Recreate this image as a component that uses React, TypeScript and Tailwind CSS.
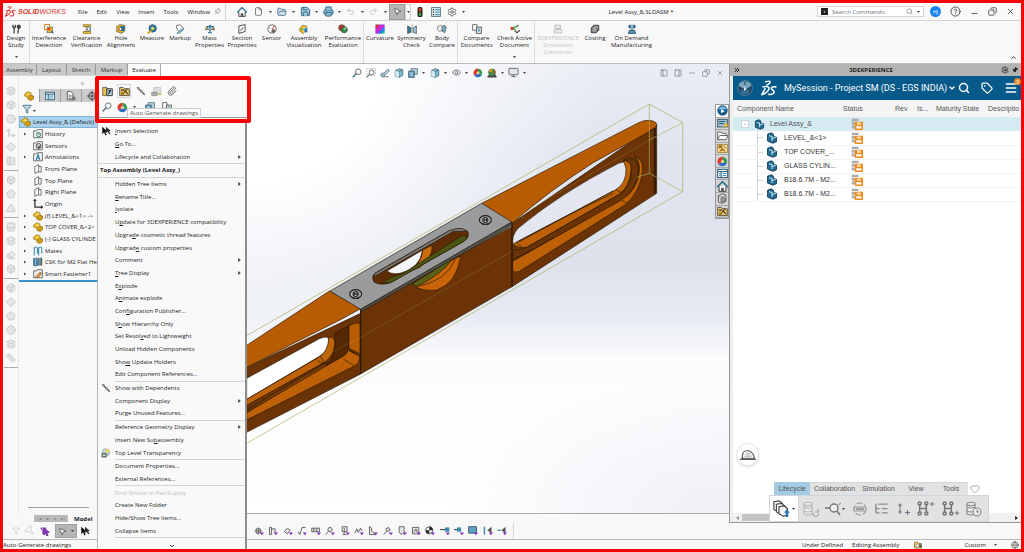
import React from "react";
import {
  File, FolderOpen, Save, Printer, Undo2, Redo2, MousePointer2, Settings, Pin, Search, Tag, Menu as MenuIcon,
  ChevronDown, ChevronsRight, ChevronUp, Minus, X, Copy, HelpCircle, Heart, Monitor, Eye, Paperclip, Filter,
  PanelLeft, PanelRight, Box, Pentagon, Circle, Diamond, Ruler, Eraser, Triangle, Layers,
  Database, ListTree, GitMerge, Plus, Globe,
} from "lucide-react";

type IconName =
  | "fasteners" | "interference" | "clearance" | "hole" | "measure" | "markup" | "mass" | "section" | "sensor"
  | "assembly" | "performance" | "curvature" | "symmetry" | "body" | "compare" | "check" | "sim" | "costing"
  | "demand" | "part" | "props" | "config" | "target" | "folderHist" | "folderSens" | "folderAnn" | "plane"
  | "origin" | "mates" | "csk" | "smart" | "zoom" | "zoomBox" | "brush" | "cube" | "cubes" | "ball" | "scene"
  | "globe" | "gallery" | "folder" | "library" | "house" | "cylinder" | "drawing" | "genDrawing" | "openDoc" | "hide" | "ghost"
  | "cursor" | "transparency" | "list" | "purpleCursor" | "box3d" | "saveStatus" | "light" | "compass" | "cap"
  | "reload" | "inspect" | "history" | "tag2";

const art: Record<IconName, React.ReactNode> = {
  fasteners: (<><path d="M2 1v4l2 2v8h2V7l2-2V1H6v3H4V1zM10 1h5l1 5-3 2-1 7h-2l1-7-2-3z" fill="#444" /></>),
  interference: (<><rect x="1" y="1" width="8" height="8" fill="#fff" stroke="#c77b16" strokeWidth="1.5" /><rect x="5" y="5" width="9" height="9" fill="#f0bd2d" stroke="#5b5b5b" /><rect x="6" y="6" width="4" height="4" fill="#d8421f" /><path d="M11 11l4 4" stroke="#2874a0" strokeWidth="2" /></>),
  clearance: (<><path d="M2 1h12v3H2zM2 12h12v3H2z" fill="#f2c230" stroke="#7b6516" /><path d="M5 4l3 4-3 4h6L8 8l3-4z" fill="#f7dd78" stroke="#4f4f4f" /><path d="M13 5v6" stroke="#2874a0" strokeWidth="2" /></>),
  hole: (<><path d="M1 4l5-3 8 1v9l-5 4-8-3z" fill="#e8b21e" stroke="#4b4b4b" /><path d="M7 3h7v8H8z" fill="#2e7399" /><circle cx="7" cy="8" r="2.4" fill="#fff" stroke="#333" /></>),
  measure: (<><circle cx="9" cy="7" r="6" fill="#2c7da5" stroke="#204c66" /><circle cx="9" cy="7" r="2.6" fill="#f0d34c" /><path d="M1 15l6-4" stroke="#e0a81a" strokeWidth="3" /></>),
  markup: (<><path d="M2 3l6-2 6 6-5 6-5-3z" fill="#fff" stroke="#555" strokeWidth="1.3" /><path d="M3 15l8-8 3 2-8 6z" fill="#8cc3dc" stroke="#3d6e86" /></>),
  mass: (<><path d="M8 1v12M2 4h12M5 14h6" stroke="#26617f" strokeWidth="1.8" /><path d="M0 9l3-5 3 5zM10 9l3-5 3 5z" fill="#e7b321" stroke="#26617f" /><path d="M8 1l3 4H5z" fill="#2c7da5" /></>),
  section: (<><path d="M3 3l10-2v11L3 15z" fill="#fff" stroke="#444" strokeWidth="1.5" /><path d="M6 11c0-4 4-2 4-6" fill="none" stroke="#444" strokeWidth="1.6" /></>),
  sensor: (<><circle cx="8" cy="8" r="6.5" fill="#fff" stroke="#555" strokeWidth="1.4" /><path d="M8 8l4-5" stroke="#d33" strokeWidth="1.6" /><circle cx="10" cy="11" r="3" fill="#666" /><path d="M4 5l2 2" stroke="#555" /></>),
  assembly: (<><path d="M1 7l5-5 7 2-1 8-6 3-5-4z" fill="#f0bb26" stroke="#77600e" /><path d="M8 6h6v8H8z" fill="#2c7da5" stroke="#fff" /><path d="M3 7h4v3H3z" fill="#5ba85a" /></>),
  performance: (<><circle cx="6" cy="6" r="5" fill="#cc3527" stroke="#444" /><circle cx="10" cy="9" r="5" fill="#3a8f4c" stroke="#333" /><path d="M10 9l3-4" stroke="#fff" strokeWidth="1.5" /></>),
  curvature: (<><rect x="1" y="1" width="14" height="14" fill="#2d5be3" /><path d="M1 1h7L1 9z" fill="#e92c2c" /><path d="M8 1h7v3L4 15H1V9z" fill="#cf27d6" /><path d="M15 4v6l-5 5H4z" fill="#2b7cf0" /><path d="M15 10v5h-5z" fill="#19d07a" /></>),
  symmetry: (<><path d="M1 3l5 3v7l-5 2z" fill="#2c7da5" stroke="#333" /><path d="M15 3l-5 3v7l5 2z" fill="#9fc8da" stroke="#333" /><path d="M8 1v14" stroke="#444" strokeDasharray="3 1" /></>),
  body: (<><path d="M1 4l5-2 3 2v6l-5 2-3-3z" fill="#eee" stroke="#555" /><path d="M8 4l4-2 3 3-3 9-4-3z" fill="#75b0cb" stroke="#333" /></>),
  compare: (<><path d="M1 1h7v9H1z" fill="#fff" stroke="#555" strokeWidth="1.3" /><path d="M7 5h8v10H7z" fill="#e8eff3" stroke="#444" strokeWidth="1.3" /><path d="M9 8h4M9 11h4" stroke="#2c7da5" strokeWidth="1.6" /></>),
  check: (<><path d="M14 2L4 7l5 3" fill="none" stroke="#52a24d" strokeWidth="2.4" /><circle cx="3" cy="7" r="2.5" fill="#cf3f27" /><path d="M8 11l3 3 5-4" fill="none" stroke="#444" strokeWidth="1.8" /></>),
  sim: (<><path d="M3 2h9v5H3zM2 9h12v5H2z" fill="#eee" stroke="#bbb" strokeWidth="1.4" /><path d="M5 12l7-8" stroke="#bbb" /></>),
  costing: (<><path d="M2 6l4-4h8v8l-4 4H2z" fill="#777" stroke="#333" strokeWidth="1.3" /><path d="M4 8h6M4 11h6M6 5h7" stroke="#eee" /></>),
  demand: (<><path d="M3 2h10v4H3z" fill="#2f7ba0" stroke="#1c4a60" /><path d="M8 5v5M4 10h8l2 5H2z" fill="#4f9dbf" stroke="#1c4a60" strokeWidth="1.3" /><circle cx="8" cy="4" r="1.5" fill="#fff" /></>),
  part: (<><path d="M1 5l5-4 5 2v3l4 2v4l-5 3-4-2v-3L1 8z" fill="#f0c02c" stroke="#8b6a10" strokeWidth="1.1" /><path d="M6 5l5 1M8 9l5 2" stroke="#fff2b0" strokeWidth="1.3" /><path d="M7 9l3-3 5 3v3l-3 3z" fill="#d99d12" stroke="#8b6a10" /></>),
  props: (<><rect x="1" y="2" width="14" height="12" fill="#fff" stroke="#2b5f7b" strokeWidth="1.5" /><path d="M1 5h14M6 5v9" stroke="#2b5f7b" strokeWidth="1.6" /><path d="M8 8h5M8 11h5M3 8h2M3 11h2" stroke="#2b86b5" strokeWidth="1.4" /></>),
  config: (<><path d="M2 1h6l3 3v10H2z" fill="#fff" stroke="#444" strokeWidth="1.3" /><path d="M5 5v7h4M5 8h5" fill="none" stroke="#444" /><rect x="9" y="9" width="6" height="6" fill="#777" /></>),
  target: (<><circle cx="8" cy="8" r="5.5" fill="none" stroke="#444" strokeWidth="1.5" /><path d="M8 0v16M0 8h16" stroke="#444" strokeWidth="1.5" /></>),
  folderHist: (<><path d="M1 3h5l1-2h8v13H1z" fill="#f5f5f5" stroke="#555" strokeWidth="1.3" /><circle cx="9" cy="9" r="3.5" fill="#dff0e8" stroke="#2b6f65" strokeWidth="1.3" /><path d="M9 6v3h2" fill="none" stroke="#2b6f65" /></>),
  folderSens: (<><path d="M1 3h5l1-2h8v13H1z" fill="#f5f5f5" stroke="#555" strokeWidth="1.3" /><circle cx="9" cy="8" r="4" fill="#ccc" stroke="#333" strokeWidth="1.3" /><circle cx="10" cy="10" r="2" fill="#555" /></>),
  folderAnn: (<><path d="M1 3h5l1-2h8v13H1z" fill="#f5f5f5" stroke="#555" strokeWidth="1.3" /><path d="M5 13l3-9 3 9M6 10h4" fill="none" stroke="#2578a8" strokeWidth="1.7" /></>),
  plane: (<path d="M3 4l6-3v11l-6 3zM9 4h4v9H9" fill="#fff" stroke="#555" strokeWidth="1.3" />),
  origin: (<path d="M3 1v12h12M1 3l2-2 2 2M13 11l2 2-2 2" fill="none" stroke="#333" strokeWidth="2" />),
  mates: (<path d="M2 15V4a2 2 0 015 0v8M9 15V4a2 2 0 015 0v8" fill="none" stroke="#3d8cae" strokeWidth="1.8" />),
  csk: (<><path d="M1 2h6v12H1z" fill="#3d86a8" stroke="#1d4b62" /><path d="M9 2h5v11H9z" fill="#477" stroke="#223" /><path d="M4 1v13M11 1v13" stroke="#cde" /></>),
  smart: (<><path d="M1 3h5l1-2h8v13H1z" fill="#eee" stroke="#555" strokeWidth="1.3" /><path d="M4 13l7-8 3 2-6 7z" fill="#e9a23c" stroke="#6d4a15" /></>),
  zoom: (<><circle cx="10" cy="6" r="4.5" fill="#f4f8fa" stroke="#666" strokeWidth="1.5" /><path d="M7 9l-6 6" stroke="#5c7f94" strokeWidth="2.4" /></>),
  zoomBox: (<><path d="M1 1h14v11H1z" fill="none" stroke="#999" strokeDasharray="3 2" /><circle cx="9" cy="7" r="4" fill="#f4f8fa" stroke="#666" strokeWidth="1.4" /><path d="M6 10l-5 5" stroke="#5c7f94" strokeWidth="2.2" /></>),
  brush: (<><path d="M4 10l9-8 2 2-8 8zM3 14h11" fill="#c7dbe4" stroke="#58788b" strokeWidth="1.5" /><circle cx="4" cy="11" r="3" fill="#9dbac8" stroke="#58788b" /></>),
  cube: (<><path d="M2 4l7-3 5 2v9l-6 3-6-2z" fill="#78b9d4" stroke="#47606e" strokeWidth="1.2" /><path d="M2 4l6 2 6-3M8 6v9" fill="none" stroke="#47606e" /><path d="M2 4l6 2v9l-6-2z" fill="#d6e8ef" /></>),
  cubes: (<><path d="M5 1h10v9H5z" fill="#b8d4e0" stroke="#55707e" strokeWidth="1.3" /><path d="M1 5h9v10H1z" fill="#6ba8c4" stroke="#395462" strokeWidth="1.3" /><path d="M3 8h5M3 11h5" stroke="#dfeef5" /></>),
  ball: (<><path d="M8 8V1a7 7 0 016 10z" fill="#2f9e4f" /><path d="M8 8l6 3A7 7 0 012 12z" fill="#2d6fc4" /><path d="M8 8L2 12A7 7 0 018 1z" fill="#dd3a2b" /><circle cx="8" cy="8" r="2.3" fill="#f6d6a0" /></>),
  scene: (<><path d="M1 13l3-3h9l2 3v2H1z" fill="#444" /><circle cx="8" cy="7" r="5.5" fill="#38974c" stroke="#6a5a2e" /><path d="M8 7L3 5a5.500 5.500 0 015-4z" fill="#e0a020" /><path d="M8 7l5-3 .5 4z" fill="#d8402c" /></>),
  globe: (<><circle cx="8" cy="8" r="7" fill="#1a6fa6" stroke="#133d5c" /><path d="M2 5q6-6 12 0-6 3-12 0z" fill="#7ec0e4" /><path d="M3 11q5 3 10 0" fill="none" stroke="#0f3f63" strokeWidth="1.5" /><path d="M6 6l5 3-5 3z" fill="#fff" /></>),
  gallery: (<><rect x="1" y="2" width="14" height="11" fill="#9cc1cf" stroke="#395b69" strokeWidth="1.4" /><path d="M3 8h7M3 5h9" stroke="#2b6280" strokeWidth="1.5" /><path d="M8 13l6-7 2 6z" fill="#efb929" /></>),
  folder: (<path d="M1 3h5l1 2h6v3h3l-3 6H1zM1 14l3-6h9" fill="#fff" stroke="#666" strokeWidth="1.4" />),
  library: (<><rect x="1" y="2" width="14" height="12" fill="#f0d89a" stroke="#9b7422" /><path d="M3 4h4v3H3zM9 4l4 4M4 12l4-4 4 4" fill="#d08b16" stroke="#7d5510" strokeWidth="1.2" /></>),
  house: (<><path d="M3 8v7h10V8" fill="#fff" stroke="#333" strokeWidth="1.4" /><path d="M0 9l8-8 8 8" fill="none" stroke="#27708f" strokeWidth="2.2" /><path d="M6 10h4v5H6z" fill="#555" /></>),
  cylinder: (<><path d="M2 4l6-3 5 2v9l-6 3-5-2z" fill="#ddd" stroke="#555" strokeWidth="1.3" /><path d="M2 4l5 2 6-3M7 6v9" fill="none" stroke="#777" /><circle cx="9" cy="10" r="3.500" fill="#999" stroke="#555" /></>),
  drawing: (<><path d="M1 2h6l2 3h6v9H1z" fill="#eec75d" stroke="#6b5a2a" strokeWidth="1.2" /><circle cx="7" cy="9" r="3" fill="#fff" stroke="#555" /><path d="M10 7h5v7l-5-3z" fill="#555" /></>),
  genDrawing: (<><path d="M1 2h5l2 2h7v10H1z" fill="#eec75d" stroke="#4b4b4b" strokeWidth="1.3" /><path d="M5 12l7-8M9 7l4 5M3 6h5" fill="none" stroke="#333" strokeWidth="1.6" /><path d="M3 9h4v4H3z" fill="#9a7c25" /></>),
  openDoc: (<><path d="M1 2h6v12H1z" fill="#ecc14a" stroke="#444" /><path d="M7 4h8v10H7z" fill="#b7d3de" stroke="#333" strokeWidth="1.3" /><path d="M9 12l4-6M9 7h4" stroke="#222" strokeWidth="1.5" /></>),
  hide: (<><path d="M2 2l12 12" stroke="#444" strokeWidth="1.7" /><path d="M3 6l3-4M7 11l4-5" stroke="#999" strokeWidth="1.3" /></>),
  ghost: (<><path d="M4 2h10v8H4z" fill="#ddd" stroke="#bbb" /><path d="M1 9h8v5H1z" fill="#aaa" stroke="#888" /><path d="M10 12h5" stroke="#c5b056" strokeWidth="2" /></>),
  cursor: (<><path d="M2 1v12l3-3 2 5 2-1-2-5h4z" fill="#111" /><path d="M8 1v10l3-2 2 4 2-1-2-4h3z" fill="#333" /></>),
  transparency: (<><circle cx="8" cy="7" r="6" fill="#b9d3dd" stroke="#999" /><path d="M8 1a6 6 0 016 6H8z" fill="#f1d26a" /><path d="M1 8h8v7H1z" fill="#4c6b48" /><path d="M3 10h4v3H3z" fill="#ddd" /></>),
  list: (<><rect x="1" y="1" width="14" height="14" fill="#e7f0f4" stroke="#4a6572" strokeWidth="1.3" /><path d="M3 4h2M3 8h2M3 12h2" stroke="#222" strokeWidth="2" /><path d="M7 4h7M7 8h7M7 12h7" stroke="#4693b6" strokeWidth="2" /></>),
  purpleCursor: (<><path d="M1 3h9l-3 5v6l-3-2V8z" fill="#b98ad8" stroke="#7a3fa5" /><path d="M6 3l9 7-4 1 2 4-2 1-2-4-3 2z" fill="#8a35c0" stroke="#4f1b78" /></>),
  box3d: (<><path d="M2 3l5-2 3 2v3l4 1v6l-5 2-7-3z" fill="#226a90" stroke="#123f58" strokeWidth="1.2" /><path d="M4 5l4 1v6M8 9l5-2" fill="none" stroke="#b7dcec" strokeWidth="1.5" /></>),
  saveStatus: (<><path d="M1 1h9v3H1zM1 5h4v4H1zM1 10h4v4H1z" fill="#aaa" /><path d="M5 5h11v11H5z" fill="#ef8a1d" /><path d="M7 11h7v3H7z" fill="#fff" /><path d="M8 6h5v3H8z" fill="#fbe0bd" /></>),
  light: (<><rect x="4" y="0" width="8" height="16" rx="3" fill="#222" /><circle cx="8" cy="4" r="2.400" fill="#e33b1f" /><circle cx="8" cy="8" r="1.700" fill="#755c19" /><circle cx="8" cy="12" r="2.200" fill="#37b24d" /></>),
  compass: (<><circle cx="8" cy="8" r="7.500" fill="#214c6c" stroke="#4d7c99" /><ellipse cx="8" cy="5" rx="6" ry="3.500" fill="#7ba6be" /><path d="M3 9q5 4 10 0l-2 5H5z" fill="#397196" /><path d="M7 7l3 2-3 2z" fill="#dcecf5" /><path d="M8 5v-3M2 8h3M11 8h3" stroke="#16384f" /></>),
  cap: (<><path d="M3 11V9q0-5 5-5 5 1 6 8" fill="#f5f5f5" stroke="#666" strokeWidth="1.100" /><path d="M1 12h14l-2-1H2z" fill="#555" stroke="#555" strokeWidth=".8" /><path d="M6 7h4M5 9h6" stroke="#999" strokeWidth=".8" /></>),
  reload: (<><g fill="#e9e9e9" stroke="#b5b5b5" strokeWidth="1.100"><path d="M1 3v10q4 2 8 0V3" /><ellipse cx="5" cy="3" rx="4" ry="1.700" /><path d="M1 6q4 2 8 0M1 10q4 2 8 0" fill="none" /></g><path d="M10 12a3 3 0 105-2M15 8v3h-3" fill="none" stroke="#a5a5a5" strokeWidth="1.200" /></>),
  inspect: (<><circle cx="9" cy="7" r="4" fill="#eee" stroke="#777" strokeWidth="1.400" /><path d="M0 7h5M12 10l3 4" stroke="#777" strokeWidth="1.600" /><path d="M13 4l3-2" stroke="#999" strokeWidth="1.200" /></>),
  history: (<><g fill="#e9e9e9" stroke="#888" strokeWidth="1.100"><path d="M1 3v10q4 2 8 0V3" /><ellipse cx="5" cy="3" rx="4" ry="1.700" /><path d="M1 6q4 2 8 0M1 10q4 2 8 0" fill="none" /><circle cx="11" cy="11" r="4" /></g><path d="M11 9v2h2" fill="none" stroke="#777" /></>),
  tag2: (<><circle cx="8" cy="8" r="6" fill="none" stroke="#999" strokeWidth="1.200" strokeDasharray="6 2" /><path d="M2 6h12v4H2z" fill="#ddd" stroke="#999" /><path d="M4 8h8" stroke="#777" strokeWidth="1.200" /></>),
};

function Art({ name, className = "size-[10px]" }: { name: IconName; className?: string }) {
  return <svg viewBox="0 0 16 16" className={`shrink-0 ${className}`} aria-hidden="true">{art[name]}</svg>;
}

function Caret({ className = "" }: { className?: string }) {
  return <svg viewBox="0 0 6 4" className={`h-[2px] w-[3px] shrink-0 ${className}`} aria-hidden="true"><path d="M0 0h6L3 4z" fill="#444" /></svg>;
}

function Logo({ className }: { className: string }) {
  return (
    <svg viewBox="0 0 30 28" className={className} fill="none" stroke="currentColor" strokeLinecap="round" strokeLinejoin="round" aria-hidden="true">
      <path d="M10 3q7-2 8 0 0 3-6 6" strokeWidth="2.400" />
      <path d="M5 12q10-2 11 2 0 7-13 12l6-11" strokeWidth="2.600" />
      <path d="M28 12q-7-1-8 2 0 2 3 4 4 3 0 6-3 2-8 1" strokeWidth="2.800" />
    </svg>
  );
}

const ribbon: { icon: IconName; lines: string[]; w: string; sep?: boolean; off?: boolean; drop?: boolean }[] = [
  { icon: "fasteners", lines: ["Design", "Study"], w: "w-[27px]", sep: true, drop: true },
  { icon: "interference", lines: ["Interference", "Detection"], w: "w-[38px]" },
  { icon: "clearance", lines: ["Clearance", "Verification"], w: "w-[37px]" },
  { icon: "hole", lines: ["Hole", "Alignment"], w: "w-[32px]" },
  { icon: "measure", lines: ["Measure"], w: "w-[30px]" },
  { icon: "markup", lines: ["Markup"], w: "w-[26px]" },
  { icon: "mass", lines: ["Mass", "Properties"], w: "w-[33px]" },
  { icon: "section", lines: ["Section", "Properties"], w: "w-[32px]" },
  { icon: "sensor", lines: ["Sensor"], w: "w-[27px]" },
  { icon: "assembly", lines: ["Assembly", "Visualization"], w: "w-[38px]" },
  { icon: "performance", lines: ["Performance", "Evaluation"], w: "w-[41px]", sep: true },
  { icon: "curvature", lines: ["Curvature"], w: "w-[32px]" },
  { icon: "symmetry", lines: ["Symmetry", "Check"], w: "w-[31px]" },
  { icon: "body", lines: ["Body", "Compare"], w: "w-[31px]", sep: true },
  { icon: "compare", lines: ["Compare", "Documents"], w: "w-[37px]" },
  { icon: "check", lines: ["Check Active", "Document"], w: "w-[40px]", sep: true, drop: true },
  { icon: "sim", lines: ["3DEXPERIENCE", "Simulation", "Connector"], w: "w-[46px]", off: true },
  { icon: "costing", lines: ["Costing"], w: "w-[28px]" },
  { icon: "demand", lines: ["On Demand", "Manufacturing"], w: "w-[45px]" },
];

function TitleBar() {
  const cls = "size-[9px] shrink-0";
  return (
    <header className="flex h-[18px] shrink-0 items-center border-b border-[#d4d4d4] bg-[#f9f9f9]">
      <div className="flex w-[75px] shrink-0 items-center gap-[2px] pl-[1px] text-[#d8362f]">
        <Logo className="h-[11px] w-[12px]" />
        <span className="font-['Liberation_Sans',sans-serif] text-[7px] italic leading-none"><b>SOLID</b>WORKS</span>
      </div>
      <nav className="flex shrink-0 items-center gap-[9px]">
        {["File", "Edit", "View", "Insert", "Tools", "Window"].map((m) => <a key={m} href="#" className="text-[#222]">{m}</a>)}
      </nav>
      <div className="flex w-[15px] shrink-0 justify-center"><Pin className="size-[7px] rotate-45 text-gray-500" /></div>
      <div className="flex h-full shrink-0 items-center gap-[5px] border-l border-gray-300 pl-[11px]">
        <button aria-label="Home" className="mr-[2px]"><Art name="house" /></button>
        <button aria-label="New" className="flex items-center gap-[6px]"><File className={cls} color="#555" /><Caret /></button>
        <button aria-label="Open" className="flex items-center gap-[5px]"><FolderOpen className="size-[10px]" color="#3c6d86" fill="#cfdfe7" /><Caret /></button>
        <button aria-label="Save" className="flex items-center gap-[4px]"><Save className="size-[11px]" color="#285f80" fill="#a9cbe0" /><Caret /></button>
        <button aria-label="Print" className="flex items-center gap-[4px]"><Printer className="size-[11px]" color="#26617f" fill="#8fbfd6" /><Caret /></button>
        <button aria-label="Undo" className="flex items-center gap-[6px]"><Undo2 className={cls} color="#bbb" /><Caret /></button>
        <button aria-label="Redo" className="flex items-center gap-[6px]"><Redo2 className={cls} color="#bbb" /><Caret /></button>
      </div>
      <div className="ml-[2px] flex shrink-0 items-center">
        <button aria-label="Select" className="flex h-[16px] w-[16px] items-center justify-center border border-[#999] bg-[#b5b5b5]"><MousePointer2 className={cls} color="#444" fill="#fff" /></button>
        <button aria-label="Select options" className="flex h-[16px] w-[6px] items-center justify-center border border-gray-300"><Caret /></button>
        <button aria-label="Rebuild" className="ml-[4px]"><Art name="light" /></button>
        <button aria-label="File properties" className="ml-[6px]"><Art name="list" /></button>
        <button aria-label="Options" className="ml-[6px] flex items-center gap-[5px]"><Settings className="size-[10px]" color="#555" /><Caret /></button>
      </div>
      <h1 className="flex-1 text-center">Level Assy_&amp;.SLDASM *</h1>
      <div className="flex h-[11px] w-[107px] shrink-0 items-center border border-gray-300 bg-white px-[3px]">
        <span className="flex size-[7px] items-center justify-center bg-[#222] font-mono text-[5px] text-white">›</span>
        <input aria-label="Search Commands" placeholder="Search Commands" className="ml-[4px] w-[75px] min-w-0 bg-transparent outline-none placeholder:text-gray-500" />
        <Search className="size-[7px] shrink-0 text-gray-500" />
        <Caret className="ml-[4px]" />
      </div>
      <div className="ml-[6px] flex shrink-0 items-center gap-[9px] pr-[6px]">
        <button className="flex size-[11px] items-center justify-center rounded-full bg-[#1583f0] text-[5px] text-white">HJ</button>
        <button aria-label="Help"><HelpCircle className="size-[11px]" color="#444" /></button>
        <button aria-label="Minimize"><Minus className="mt-[3px] size-[9px]" color="#333" /></button>
        <button aria-label="Restore"><Copy className="size-[9px] -scale-x-100" color="#333" /></button>
        <button aria-label="Close"><X className="size-[9px]" color="#333" /></button>
      </div>
    </header>
  );
}

function Ribbon() {
  return (
    <div className="relative flex h-[43px] shrink-0 border-b border-[#bdbdbd] bg-[#f8f8f8]">
      {ribbon.map((r) => (
        <button key={r.lines.join()} disabled={r.off} className={`flex shrink-0 flex-col items-center pt-[3px] ${r.w} ${r.sep ? "border-r border-[#dcdcdc]" : ""} ${r.off ? "text-[#c4c4c4]" : ""}`}>
          <Art name={r.icon} />
          <span className="mt-[1px] block whitespace-nowrap leading-[7px]">{r.lines.map((l) => <span key={l} className="block">{l}</span>)}</span>
          {r.drop && <Caret className="mt-[7px]" />}
        </button>
      ))}
      <button aria-label="Collapse ribbon" className="ml-auto self-end pb-[2px] pr-[4px]"><ChevronUp className="size-[7px]" strokeWidth={3} /></button>
    </div>
  );
}

const tree: { icon: IconName; label: string; open?: boolean }[] = [
  { icon: "folderHist", label: "History", open: true },
  { icon: "folderSens", label: "Sensors" },
  { icon: "folderAnn", label: "Annotations", open: true },
  { icon: "plane", label: "Front Plane" },
  { icon: "plane", label: "Top Plane" },
  { icon: "plane", label: "Right Plane" },
  { icon: "origin", label: "Origin" },
  { icon: "part", label: "(f) LEVEL_&<1> ->", open: true },
  { icon: "part", label: "TOP COVER_&<2>", open: true },
  { icon: "part", label: "(-) GLASS CYLINDE", open: true },
  { icon: "mates", label: "Mates", open: true },
  { icon: "csk", label: "CSK for M2 Flat He", open: true },
  { icon: "smart", label: "Smart Fastener1", open: true },
];

const sideTools = [
  [Layers, Box, Circle, GitMerge, Diamond, PanelLeft],
  [Box, Pentagon, Triangle],
  [Database, Layers, Eraser, Box],
  [Box, Diamond, Pentagon, Circle, Layers, Ruler],
];

function LeftPane() {
  return (
    <aside className="flex w-[95px] shrink-0 flex-col bg-[#f8f8f8]">
      <div role="tablist" className="relative z-10 flex h-[12px] w-[158px] shrink-0 border-b border-gray-300 bg-white">
        {[["Assembly", "w-[34px]"], ["Layout", "w-[30px]"], ["Sketch", "w-[29px]"], ["Markup", "w-[32px]"]].map(([t, w]) => (
          <button role="tab" key={t} className={`${w} shrink-0 border-r border-[#999] bg-[#c9c9c9] text-[#333]`}>{t}</button>
        ))}
        <button role="tab" aria-selected="true" className="h-[12px] w-[33px] border-r border-[#aaa] bg-[#fafafa]">Evaluate</button>
      </div>
      <div className="flex min-h-0 flex-1">
        <div className="flex w-[16px] shrink-0 flex-col items-center border-r border-gray-200 pt-[6px] text-[#c4c4c4]">
          {sideTools.map((g, i) => (
            <div key={i} className="flex flex-col items-center gap-[4px] border-b border-[#aaa] px-[2px] py-[4px]">
              {g.map((Icon, j) => <Icon key={j} className="size-[10px]" fill="#e6e6e6" />)}
            </div>
          ))}
        </div>
        <div className="flex min-w-0 flex-1 flex-col">
          <div className="flex h-[13px] items-end justify-center pb-[4px] pl-[48px]"><i className="size-[3px] rounded-full border border-gray-400" /></div>
          <div className="flex h-[13px] shrink-0">
            {(["part", "props", "config", "target"] as IconName[]).map((n, i) => (
              <button key={n} aria-label={n} className={`flex w-[21px] shrink-0 items-center justify-center border-r border-gray-400 ${i ? "bg-[#cbcbcb]" : "bg-[#f8f8f8]"}`}><Art name={n} /></button>
            ))}
          </div>
          <div className="flex h-[14px] shrink-0 items-center pl-[3px]"><Filter className="size-[10px]" color="#3f6c82" fill="#bcd5e0" /><Caret className="ml-[1px] mt-[4px]" /></div>
          <div className="flex h-[12px] shrink-0 items-center gap-[2px] overflow-hidden whitespace-nowrap border border-[#7fb3d6] bg-[#a9d0ec] pl-[1px]"><Art name="part" />Level Assy_&amp; (Default)</div>
          <ul className="flex h-[154px] shrink-0 flex-col border-b-2 border-[#3a92c4]">
            {tree.map((n) => (
              <li key={n.label} className="flex min-h-0 flex-1 items-center overflow-hidden whitespace-nowrap pl-[5px]">
                <span className="w-[9px] shrink-0">{n.open && <svg viewBox="0 0 4 6" className="h-[4px] w-[2px]"><path d="M0 0l4 3-4 3z" fill="#444" /></svg>}</span>
                <Art name={n.icon} /><span className="ml-[2px]">{n.label}</span>
              </li>
            ))}
          </ul>
          <div className="mx-[9px] mt-auto mb-[6px] border-b border-gray-400" />
        </div>
      </div>
    </aside>
  );
}

function Model() {
  const screw = (x: number, y: number) => (
    <g transform={`translate(${x} ${y})`} fill="none" stroke="#222" strokeWidth="3.5">
      <ellipse rx="18" ry="13" fill="#aaa" /><circle r="8" strokeWidth="3" /><path d="M-4-5v9M4-5v9M-4 0h8M-9 13h5M4 13h6" />
    </g>
  );
  return (
    <svg viewBox="-426 12 1893 1350" preserveAspectRatio="xMinYMin slice" className="absolute inset-0 h-full w-full" aria-label="Level assembly model" strokeLinejoin="round">
      <g stroke="#2a1a08" strokeWidth="2">
        <path d="M-426 1150L20 922 362 760V942L20 1117-426 1345z" fill="#6b3306" />
        <path d="M-426 1120L20 856 268 693 362 746 300 780Q160 850 20 922L-426 1150z" fill="#b85c04" />
        <path d="M20 955L238 836Q266 824 267 842 268 872 240 888L20 1018z" fill="#fff" />
        <path d="M267 830Q288 830 284 858 278 892 252 908L20 1038V1018L236 892Q264 876 267 830z" fill="#bf6309" />
        <path d="M20 1036L252 908V916L20 1050z" fill="#6b3306" />
        <path d="M20 1050L250 912 306 895 20 1056z" fill="#7b3b06" />
        <path d="M326 798Q355 782 360 794V882L326 864z" fill="#b85c04" />
        <path d="M326 800V858Q326 880 306 890L20 1058V1080L345 917Q360 908 359 886L327 872" fill="#bd6006" />
        <path d="M326 798V860Q324 880 306 890L256 918Q296 880 284 820z" fill="#552703" />
        <path d="M310 897l32 20M327 872l33 18M232 902l22 10M240 888l14 20" fill="none" />
        <path d="M362 746L816 500V680L362 942z" fill="#6b3306" />
        <path d="M816 490L1228 208Q1246 205 1250 194V400L816 680z" fill="#6b3306" />
        <path d="M725 430L1196 188Q1228 174 1248 188 1254 198 1240 208L1060 308Q930 390 816 490z" fill="#b85c04" />
        <path d="M1228 213L1246 204V402M1243 208v194" fill="none" strokeWidth="3" />
        <path d="M820 556Q812 530 834 505 960 400 1135 310 1170 296 1170 328 1170 372 1134 388L838 545z" fill="#e3e6f0" />
        <path d="M1150 302Q1176 300 1174 326 1170 382 1136 404L860 562Q832 566 820 552L1126 390Q1160 370 1158 324z" fill="#bd6006" />
        <path d="M1152 300Q1192 282 1196 328 1192 384 1152 420L818 600V570Q840 572 862 562L1136 404Q1178 376 1174 326 1174 304 1152 300z" fill="#6b3306" />
        <path d="M1184 290Q1210 296 1208 332 1200 396 1156 434L838 634Q826 640 818 632V604L1144 420Q1192 392 1198 334 1200 300 1184 290z" fill="#bd6006" />
        <path d="M1128 388l18 12M1144 420l18 10M832 550l14 12" fill="none" />
        <path d="M838 545L1120 392M826 548Q980 465 1120 400" fill="none" />
        <path d="M270 693L725 430 816 486 362 748z" fill="#999b9d" />
        <path d="M362 748L816 486V496L362 756z" fill="#4f5452" />
        <path d="M402 666Q390 645 414 634L628 512Q664 498 684 516 690 534 668 546L452 668Q420 678 402 666z" fill="#5f2d05" />
        <path d="M402 650Q400 640 416 634L628 512Q664 498 682 514L640 514 440 628z" fill="#7c8083" />
        <path d="M442 632L548 570Q540 625 480 640 450 644 442 632z" fill="#f5f6fa" />
        <path d="M548 570L576 556Q580 590 540 622L490 642Q545 618 548 570z" fill="#ca6a0c" />
        <path d="M430 668Q440 654 490 640L660 530Q684 520 680 536L668 546 452 668z" fill="#4c5510" />
        <path d="M516 672Q540 696 590 690 650 670 662 588L636 600Q590 640 516 672z" fill="#c96508" />
        <path d="M516 672L636 598Q610 640 530 680z" fill="#5a6015" />
        <path d="M530 680Q618 664 646 598" fill="none" />
        <path d="M362 748V942M816 486V680" fill="none" strokeWidth="3" />
      </g>
      {screw(347, 702)}
      {screw(736, 480)}
      <g fill="none" stroke="#a9ad5b" strokeWidth="2">
        <path d="M-426 1080L20 827 1228 132 1328 188V395L20 1150-426 1400M1228 132V340L1328 395M1228 340L1190 352M1328 188L1228 240" />
        <path d="M1228 240L816 480M816 574L362 832 250 890" strokeWidth="1.500" opacity=".5" />
      </g>
    </svg>
  );
}

function Viewport() {
  const g = "text-gray-500 size-[8px]";
  return (
    <section className="relative min-w-0 flex-1 border-b border-[#aaa] bg-[radial-gradient(ellipse_55%_75%_at_25%_0%,#ffffff_35%,transparent_100%),radial-gradient(ellipse_45%_30%_at_100%_100%,#eef0f6_0%,transparent_100%),linear-gradient(#eaedf4_0%,#dfe4ef_20%,#dde2ed_45%,#e6eaf3_56%,#fcfcfe_66%,#ffffff_100%)]">
      <Model />
      <div className="relative flex h-[17px] items-center gap-[4px] pl-[254px] pr-[5px]">
        <Art name="zoom" /><Art name="zoomBox" /><Art name="brush" /><Art name="cube" />
        <Art name="cubes" /><Caret className="mr-[1px]" />
        <Art name="cube" /><Caret className="mr-[1px]" />
        <Eye className="size-[9px]" color="#555" /><Caret className="mr-[1px]" />
        <Art name="ball" /><Art name="scene" /><Caret />
        <Monitor className="size-[11px]" color="#666" fill="#dfe5ea" /><Caret />
        <div className="ml-auto flex items-center gap-[6px]">
          <PanelLeft className={g} /><PanelRight className={g} /><Minus className={g} /><Copy className={`${g} -scale-x-100`} /><X className={g} />
        </div>
      </div>
      <div className="absolute right-0 top-[40px] flex h-[115px] w-[14px] flex-col border border-[#999] bg-[#d5d5d5]">
        {(["globe", "gallery", "folder", "library", "ball", "props", "house", "cylinder", "genDrawing"] as IconName[]).map((n, i) => (
          <button key={n} aria-label={n} className={`flex min-h-0 w-full flex-1 items-center justify-center border-b border-[#aaa] ${i ? "" : "bg-white"}`}><Art name={n} className="size-[11px]" /></button>
        ))}
      </div>
    </section>
  );
}

type Item = { l: string; k?: number; sub?: boolean; icon?: IconName; off?: boolean; head?: boolean };
const groups: Item[][] = [
  [{ l: "Invert Selection", k: 0, icon: "cursor" }, { l: "Go To...", k: 0 }, { l: "Lifecycle and Collaboration", sub: true }],
  [{ l: "Top Assembly (Level Assy_)", head: true }],
  [
    { l: "Hidden Tree Items", sub: true }, { l: "Rename Title...", k: 0 }, { l: "Isolate", k: 0 },
    { l: "Update for 3DEXPERIENCE compatibility", k: 1 }, { l: "Upgrade cosmetic thread features", k: 5 },
    { l: "Upgrade custom properties", k: 6 }, { l: "Comment", sub: true }, { l: "Tree Display", k: 0, sub: true },
    { l: "Explode", k: 1 }, { l: "Animate explode", k: 1 }, { l: "Configuration Publisher...", k: 3 },
    { l: "Show Hierarchy Only", k: 1 }, { l: "Set Resolved to Lightweight", k: 9 }, { l: "Unload Hidden Components" },
    { l: "Show Update Holders", k: 3 }, { l: "Edit Component References..." },
  ],
  [{ l: "Show with Dependents", icon: "hide" }, { l: "Component Display", sub: true }, { l: "Purge Unused Features..." }],
  [{ l: "Reference Geometry Display", sub: true }, { l: "Insert New Subassembly", k: 13 }, { l: "Top Level Transparency", icon: "transparency" }],
  [{ l: "Document Properties..." }, { l: "External References..." }],
  [{ l: "Find Similar in PartSupply", off: true }, { l: "Create New Folder" }, { l: "Hide/Show Tree Items..." }, { l: "Collapse Items" }],
];

function MenuRow({ it }: { it: Item }) {
  return (
    <button role="menuitem" disabled={it.off} className={`flex min-h-0 w-full flex-1 items-center whitespace-nowrap text-left ${it.off ? "text-[#bdbdbd]" : ""}`}>
      {it.head ? <b className="pl-[2px] font-bold">{it.l}</b> : (
        <>
          <span className="flex w-[17px] shrink-0 pl-[3px]">{it.icon && <Art name={it.icon} />}</span>
          <span>{it.k === undefined ? it.l : <>{it.l.slice(0, it.k)}<u className="underline-offset-1">{it.l[it.k]}</u>{it.l.slice(it.k + 1)}</>}</span>
          {it.sub && <svg viewBox="0 0 4 6" className="ml-auto mr-[4px] h-[4px] w-[3px]"><path d="M0 0l4 3-4 3z" fill="#444" /></svg>}
        </>
      )}
    </button>
  );
}

function ContextMenu() {
  return (
    <div role="menu" className="absolute bottom-0 left-[94px] top-[76px] z-20 flex w-[150px] flex-col border-x border-[#b5b5b5] border-r-2 border-r-[#8d8d8d] bg-[#f9f9f9]">
      <div className="absolute -left-[3px] -top-[3px] z-10 flex h-[47px] w-[156px] flex-col gap-[4px] rounded-[2px] border-4 border-[#fb0007] bg-[#f9f9f9] px-[3px] pt-[4px]">
        <div className="flex items-center gap-[4px]">
          <Art name="openDoc" className="size-[11px]" />
          <span className="flex size-[14px] items-center justify-center border border-gray-300 bg-white"><Art name="genDrawing" className="size-[11px]" /></span>
          <Art name="hide" className="mx-[1px] size-[10px]" /><Art name="ghost" className="size-[11px]" /><Paperclip className="ml-[1px] size-[10px]" color="#555" />
        </div>
        <div className="flex items-start gap-[5px]">
          <Art name="zoom" /><Art name="ball" className="size-[11px]" /><Caret className="mt-[4px]" /><Art name="cubes" className="ml-[4px] size-[10px]" /><Art name="compare" className="ml-[2px] size-[10px]" />
        </div>
        <div className="absolute inset-x-0 bottom-[1px] border-b border-[#999]" />
        <div role="tooltip" className="absolute left-[28px] top-[28px] border border-[#ccc] bg-[#fdfdfd] px-[2px] leading-[8px] text-[#555]">Auto-Generate drawings</div>
      </div>
      <div className="flex min-h-0 flex-1 flex-col pt-[46px]">
        {groups.map((g, i) => (
          <React.Fragment key={i}>
            {g.map((it) => <MenuRow key={it.l} it={it} />)}
            <div className={`h-px shrink-0 bg-[#d4d4d4] ${i === 0 || i === 1 ? "" : "ml-[17px]"}`} />
          </React.Fragment>
        ))}
      </div>
      <button aria-label="More commands" className="flex h-[11px] shrink-0 items-end justify-center"><ChevronDown className="size-[6px]" strokeWidth={4} /></button>
    </div>
  );
}

const parts = ["LEVEL_&<1>", "TOP COVER_...", "GLASS CYLIN...", "B18.6.7M - M2...", "B18.6.7M - M2..."];

function SessionPanel() {
  const t = "size-[15px] text-[#8a8a8a]";
  return (
    <aside className="relative flex w-[292px] shrink-0 flex-col border-l border-b border-[#999] bg-white">
      <div className="flex h-[12px] shrink-0 items-center bg-[#b3b3b3] px-[3px]">
        <ChevronsRight className="size-[8px]" strokeWidth={3} />
        <span className="flex-1 text-center font-bold">3DEXPERIENCE</span>
        <Settings className="size-[8px]" /><Pin className="ml-[3px] size-[6px] rotate-45" fill="#111" />
      </div>
      <div className="flex min-h-0 flex-1 flex-col border-l-[3px] border-[#eee]">
        <div className="relative flex h-[24px] shrink-0 items-center bg-[#065a8a] pl-[4px] pr-[3px] text-white">
          <Art name="compass" className="size-[16px]" />
          <Logo className="ml-[7px] h-[16px] w-[17px] shrink-0" />
          <h2 className="ml-[7px] whitespace-nowrap font-['Roboto',sans-serif] text-[9px] leading-none">MySession - Project SM (DS - EGS INDIA)</h2>
          <ChevronDown className="ml-[1px] size-[8px] shrink-0" strokeWidth={4} />
          <div className="ml-auto flex shrink-0 items-center gap-[11px]">
            <button aria-label="Search"><Search className="size-[12px]" strokeWidth={3} /></button>
            <button aria-label="Tags"><Tag className="size-[12px]" strokeWidth={2.500} /></button>
            <button aria-label="Menu"><MenuIcon className="size-[14px]" strokeWidth={2.500} /></button>
          </div>
          <span className="absolute right-0 top-[2px] flex size-[7px] items-center justify-center rounded-full bg-[#f08a24] text-[5px]">3</span>
        </div>
        <table className="w-full table-fixed border-collapse whitespace-nowrap text-left font-['Liberation_Sans',sans-serif] text-[7px] leading-[10px] text-[#555]">
          <thead>
            <tr className="h-[17px] bg-[#f4f4f4]">
              <th className="w-[107px] pl-[4px] font-normal">Component Name</th><th className="w-[52px] pl-[3px] font-normal">Status</th>
              <th className="w-[22px] pl-[3px] font-normal">Rev</th><th className="w-[20px] pl-[3px] font-normal">Is...</th>
              <th className="w-[52px] pl-[2px] font-normal">Maturity State</th><th className="pl-[2px] font-normal">Descriptio</th>
            </tr>
          </thead>
          <tbody>
            <tr className="h-[14px] bg-[#d6eaf3]">
              <td><div className="flex items-center pl-[8px]"><button aria-label="Collapse" className="flex size-[8px] items-center justify-center border border-gray-300 bg-white text-[6px]">-</button><Art name="box3d" className="ml-[5px] size-[11px]" /><span className="ml-[5px]">Level Assy_&amp;</span></div></td>
              <td className="pl-[11px]"><Art name="saveStatus" className="size-[12px]" /></td><td colSpan={4} />
            </tr>
            {parts.map((p, i) => (
              <tr key={i} className="h-[14px] border-b border-[#f4f4f4]">
                <td><div className="ml-[24px] flex h-[13px] items-center border-l border-gray-300"><i className="w-[5px] shrink-0 border-t border-gray-300" /><Art name="box3d" className="ml-[3px] size-[12px]" /><span className="ml-[6px] text-[#333]">{p}</span></div></td>
                <td className="pl-[11px]"><Art name="saveStatus" className="size-[12px]" /></td><td colSpan={4} />
              </tr>
            ))}
          </tbody>
        </table>
        <button aria-label="Role" className="mb-[16px] ml-[3px] mt-auto flex size-[23px] items-center justify-center rounded-full border border-gray-200 bg-white shadow"><Art name="cap" className="size-[18px]" /></button>
        <div className="ml-[36px] w-[220px]">
          <div role="tablist" className="ml-[5px] flex h-[13px] items-stretch font-['Liberation_Sans',sans-serif] text-[7px] text-[#555]">
            <button role="tab" aria-selected="true" className="w-[36px] shrink-0 bg-[#a3cbe3]">Lifecycle</button>
            {[["Collaboration", "w-[49px]"], ["Simulation", "w-[39px]"], ["View", "w-[36px]"], ["Tools", "w-[34px]"]].map(([l, w]) => <button role="tab" key={l} className={`${w} shrink-0 border-t border-gray-300 bg-[#e2e2e2]`}>{l}</button>)}
            <Heart className="ml-[2px] size-[10px] shrink-0 self-center" color="#999" />
          </div>
          <div className="relative z-10 flex h-[27px] items-center border border-gray-300 bg-[#e2e2e2]">
            <button aria-label="Save to platform" className="flex h-full w-[29px] items-center justify-center gap-[2px] border-r border-gray-300 bg-white">
              <svg viewBox="0 0 20 20" className="size-[17px]" fill="#f4f4f4" stroke="#444" strokeWidth="1.300"><path d="M1 2l6-1 4 3v9l-5 1-5-3z" /><path d="M4 5l6-1 4 3v9l-5 1-5-3z" /><path d="M7 8l6-1 4 3v8l-5 1-5-3z" /><path d="M15 20v-5h-2l3-4 4 4h-2v5z" fill="#2478a8" stroke="none" /></svg><Caret />
            </button>
            <div className="flex flex-1 items-center justify-between pl-[4px] pr-[6px]">
              <Art name="reload" className="size-[16px]" />
              <span className="flex items-center gap-[1px]"><Art name="inspect" className="size-[16px]" /><Caret /></span>
              <Art name="tag2" className="size-[16px]" /><ListTree className={t} />
              <span className="flex items-end"><Nodes tall /><Plus className="size-[7px] text-gray-500" strokeWidth={4} /></span>
              <span className="flex items-start"><Nodes /><Plus className="size-[6px] text-gray-500" strokeWidth={4} /></span>
              <span className="flex items-end"><Nodes /><Plus className="size-[6px] text-gray-500" strokeWidth={4} /></span>
              <Art name="history" className="size-[16px]" />
            </div>
          </div>
        </div>
        <div className="-mt-[9px] flex h-[9px] shrink-0 items-center justify-between bg-[#f1f1f1] px-[3px]">
          <svg viewBox="0 0 4 6" className="h-[4px] w-[3px]"><path d="M4 0L0 3l4 3z" fill="#888" /></svg>
          <i className="ml-[3px] mr-auto h-[7px] w-[60px] bg-[#c4c4c4]" />
          <svg viewBox="0 0 4 6" className="h-[4px] w-[3px]"><path d="M0 0l4 3-4 3z" fill="#111" /></svg>
        </div>
      </div>
    </aside>
  );
}

function Nodes({ tall }: { tall?: boolean }) {
  return (
    <svg viewBox="0 0 14 18" className={tall ? "h-[15px] w-[8px]" : "h-[15px] w-[12px]"} fill="none" stroke="#777" strokeWidth="1.800" aria-hidden="true">
      <path d={tall ? "M7 4v10" : "M3 4v10M11 4v10M3 9h8"} /><circle cx={tall ? 7 : 3} cy="3" r="1.800" /><circle cx={tall ? 7 : 3} cy="15" r="1.800" />
      {!tall && <><circle cx="11" cy="3" r="1.800" /><circle cx="11" cy="15" r="1.800" /></>}
    </svg>
  );
}

const filterShapes = [
  "M6 2v10M1 7h10M3 4h6v6H3z", "M2 2v10h3V2zM5 4h5v6", "M2 8l4-5 4 3-4 5z", "M1 8l3 4 3-10h5", "M1 3h11v5H1zM4 3v5M8 3v5",
  "M1 12l4-5M4 5a3 3 0 106 0 3 3 0 10-6 0", "M3 1h7v7H3zM6 3v7l-2 2h5", "M1 10l3-6 2 5 3-6 2 4", "M2 1v11h9L5 7V3z", "M1 12l4-5M4 4l4-2 2 4-4 2z",
  "M3 1h7v8l-3 3-4-3z", "M2 2h9v9H2zM4 9l3-5 2 5",
];

function BottomBar() {
  return (
    <div className="flex h-[17px] shrink-0 items-center border-b border-[#bbb] bg-[#f8f8f8]">
      <div className="flex w-[91px] shrink-0 items-center gap-[5px] pl-[9px]">
        <Filter className="size-[8px]" color="#ccc" /><Filter className="size-[10px] -rotate-45" color="#ccc" /><Art name="purpleCursor" />
        <button aria-label="Select" className="flex h-[14px] w-[22px] shrink-0 items-center justify-center gap-[4px] border border-gray-400 bg-[#b5b5b5]"><MousePointer2 className="size-[9px]" color="#444" fill="#fff" /><Caret /></button>
        <Art name="cursor" className="-ml-[2px] size-[10px]" />
      </div>
      <div className="ml-[160px] flex h-full w-[260px] items-center justify-between border-r border-gray-300 pr-[6px]">
        {filterShapes.map((d, i) => (
          <svg key={i} viewBox="0 0 14 14" className="size-[10px]" fill="#e4e4e4" stroke="#555" strokeWidth="1.200" aria-hidden="true"><path d={d} /><path d="M8 9h6l-3 4z" fill="#8d32bd" stroke="none" /></svg>
        ))}
        {[0, 1, 2, 3, 4, 5].map((i) => (
          <svg key={i} viewBox="0 0 14 14" className="size-[10px]" aria-hidden="true">
            {i === 0 && <><circle cx="6" cy="6" r="5" fill="#fff" stroke="#222" /><path d="M6 6V1a5 5 0 015 5zM6 6v5a5 5 0 01-5-5z" fill="#222" /></>}
            {(i === 1 || i === 2) && <><path d="M0 5h7" stroke="#444" strokeWidth="1.500" /><rect x={i === 1 ? 7 : 4} y="2" width="6" height="6" fill="#3d8cae" /></>}
            {i === 3 && <rect x="1" y="1" width="11" height="9" fill="#5da3c2" stroke="#234" />}
            {i > 3 && <><path d={i === 4 ? "M2 1v11" : "M1 6h4"} stroke="#3d8cae" strokeWidth="2" /><path d="M12 1v9L6 6z" fill="#555" /></>}
            <path d="M8 9h6l-3 4z" fill="#8d32bd" />
          </svg>
        ))}
      </div>
    </div>
  );
}

export default function App() {
  return (
    <div className="relative flex h-screen w-full flex-col overflow-hidden border-[3px] border-[#fb0007] bg-[#f8f8f8] font-['Open_Sans','Noto_Sans',sans-serif] text-[6px] leading-[8px] text-[#1c1c1c]">
      <TitleBar />
      <Ribbon />
      <main className="flex min-h-0 flex-1">
        <div className="flex min-w-0 flex-1 flex-col">
          <div className="flex min-h-0 flex-1"><LeftPane /><Viewport /></div>
          <div className="flex h-[9px] shrink-0 items-center pl-[31px]">
            <span className="flex h-[7px] w-[34px] items-center justify-around bg-[#b9b9b9] text-[4px] text-gray-500"><i>|◂</i><i>◂</i><i>▸</i><i>▸|</i></span>
            <b className="ml-[6px]">Model</b>
          </div>
        </div>
        <SessionPanel />
      </main>
      <BottomBar />
      <footer className="flex h-[9px] shrink-0 items-center whitespace-nowrap pr-[2px]">
        <span>Auto-Generate drawings</span>
        <span className="ml-auto">Under Defined</span><span className="ml-[9px]">Editing Assembly</span>
        <Art name="drawing" className="ml-[15px] size-[8px]" />
        <span className="ml-[42px]">Custom</span><Caret className="ml-[8px]" /><Globe className="ml-[14px] size-[8px]" color="#555" />
      </footer>
      <ContextMenu />
    </div>
  );
}
